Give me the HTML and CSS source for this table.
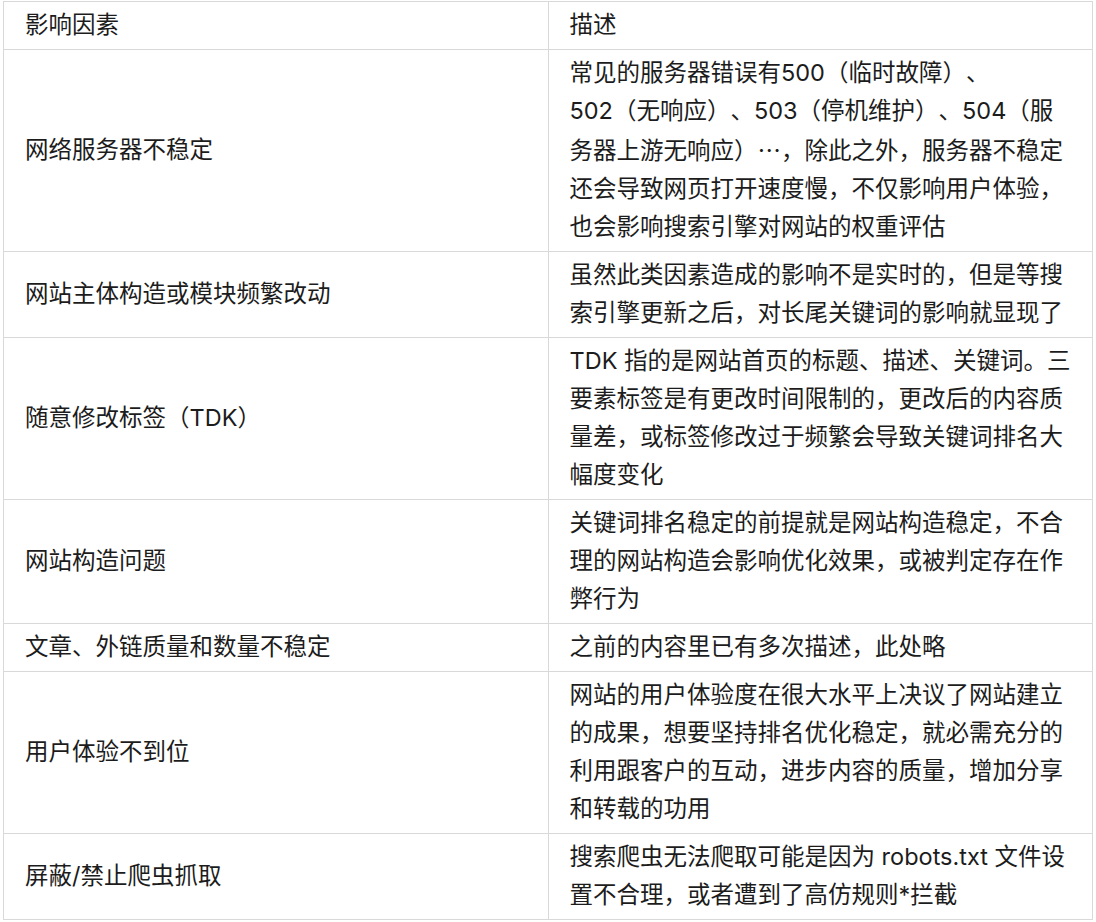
FILE: index.html
```html
<!DOCTYPE html>
<html lang="zh-CN">
<head>
<meta charset="utf-8">
<title>影响因素</title>
<link rel="stylesheet" href="styles.css">
</head>
<body>
<table class="factors">
  <colgroup><col class="col-factor"><col class="col-desc"></colgroup>
  <thead>
    <tr><th>影响因素</th><th class="desc">描述</th></tr>
  </thead>
  <tbody>
    <tr>
      <td>网络服务器不稳定</td>
      <td class="desc">常见的服务器错误有500（临时故障）、<br>502（无响应）、503（停机维护）、504（服<br>务器上游无响应）<span class="cjk">…</span>，除此之外，服务器不稳定<br>还会导致网页打开速度慢，不仅影响用户体验，<br>也会影响搜索引擎对网站的权重评估</td>
    </tr>
    <tr>
      <td>网站主体构造或模块频繁改动</td>
      <td class="desc">虽然此类因素造成的影响不是实时的，但是等搜<br>索引擎更新之后，对长尾关键词的影响就显现了</td>
    </tr>
    <tr>
      <td>随意修改标签（TDK）</td>
      <td class="desc">TDK 指的是网站首页的标题、描述、关键词。三<br>要素标签是有更改时间限制的，更改后的内容质<br>量差，或标签修改过于频繁会导致关键词排名大<br>幅度变化</td>
    </tr>
    <tr>
      <td>网站构造问题</td>
      <td class="desc">关键词排名稳定的前提就是网站构造稳定，不合<br>理的网站构造会影响优化效果，或被判定存在作<br>弊行为</td>
    </tr>
    <tr>
      <td>文章、外链质量和数量不稳定</td>
      <td class="desc">之前的内容里已有多次描述，此处略</td>
    </tr>
    <tr>
      <td>用户体验不到位</td>
      <td class="desc">网站的用户体验度在很大水平上决议了网站建立<br>的成果，想要坚持排名优化稳定，就必需充分的<br>利用跟客户的互动，进步内容的质量，增加分享<br>和转载的功用</td>
    </tr>
    <tr>
      <td>屏蔽/禁止爬虫抓取</td>
      <td class="desc">搜索爬虫无法爬取可能是因为 robots.txt 文件设<br>置不合理，或者遭到了高仿规则*拦截</td>
    </tr>
  </tbody>
</table>
</body>
</html>
```

FILE: styles.css
```css
html, body {
  margin: 0;
  padding: 0;
  background: #ffffff;
}

body {
  font-family: Inter, "Noto Sans CJK SC", sans-serif;
  color: #1c1c1c;
  text-spacing-trim: space-all;
}

.factors {
  margin: 1px 0 0 3px;
  width: 1090px;
  table-layout: fixed;
  border-collapse: collapse;
  font-size: 23.5px;
  line-height: 38px;
}

.col-factor,
.col-desc {
  width: 50%;
}

.factors th,
.factors td {
  border: 1px solid #d9d9d9;
  padding: 4px 21px 5px 21px;
  text-align: left;
  font-weight: 400;
  vertical-align: middle;
}

.factors .desc {
  white-space: nowrap;
}

.cjk {
  font-family: "Noto Sans CJK SC", sans-serif;
}
```
